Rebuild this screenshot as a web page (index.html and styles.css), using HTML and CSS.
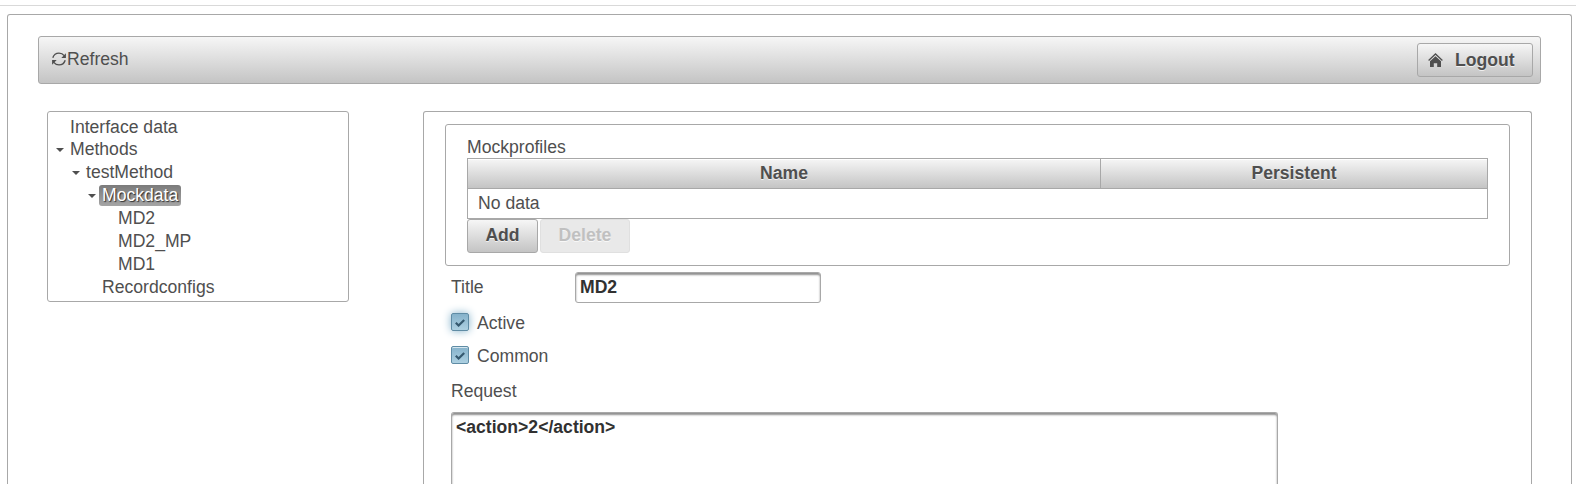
FILE: index.html
```html
<!DOCTYPE html>
<html lang="en">
<head>
<meta charset="utf-8">
<title>Mock configuration</title>
<link rel="stylesheet" href="styles.css">
</head>
<body>
<div class="page">
  <div class="toolbar">
    <a class="refresh"><svg class="refresh-icon" width="14" height="14" viewBox="0 0 14 14"><path d="M.8 5.800C1.700 3 4 1.100 7 1.100c2.100 0 3.900.8 5.200 2.500M13.200 8.200c-.9 2.800-3.200 4.700-6.200 4.700-2.100 0-3.900-.8-5.200-2.500" fill="none" stroke="#4f4f4f" stroke-width="1.400"/><path d="M13.900 1.300v4.600H9.300zM.1 12.700V8.100h4.600z" fill="#4f4f4f"/></svg><span>Refresh</span></a>
    <button class="btn logout"><svg class="home-icon" width="15" height="14" viewBox="0 0 15 14"><path d="M.6 7.400 7.500 1l6.900 6.400" fill="none" stroke="#4f4f4f" stroke-width="1.300"/><path d="M7.500 3.200 13 8.300V14H9.200v-3.700H5.800V14H2V8.300z" fill="#4f4f4f"/></svg><span>Logout</span></button>
  </div>
  <div class="columns">
    <div class="tree">
      <div class="node first">Interface data</div>
      <div class="node"><i class="caret"></i>Methods</div>
      <div class="node level-1"><i class="caret"></i>testMethod</div>
      <div class="node level-2"><i class="caret"></i><span class="selected">Mockdata</span></div>
      <div class="node level-3">MD2</div>
      <div class="node level-3">MD2_MP</div>
      <div class="node level-3">MD1</div>
      <div class="node level-2">Recordconfigs</div>
    </div>
    <div class="content">
      <div class="profiles">
        <div class="profiles-title">Mockprofiles</div>
        <div class="table">
          <div class="table-head"><div class="th name">Name</div><div class="th persistent">Persistent</div></div>
          <div class="table-empty">No data</div>
        </div>
        <div class="actions"><button class="btn add">Add</button><button class="btn delete">Delete</button></div>
      </div>
      <div class="field"><span class="label">Title</span><div class="input">MD2</div></div>
      <div class="check-row"><span class="checkbox focused"><svg width="10" height="8" viewBox="0 0 10 8"><path d="M.8 3.700 3.600 6.500 9.200 1" fill="none" stroke="#35596f" stroke-width="2.200"/></svg></span>Active</div>
      <div class="check-row"><span class="checkbox"><svg width="10" height="8" viewBox="0 0 10 8"><path d="M.8 3.700 3.600 6.500 9.200 1" fill="none" stroke="#35596f" stroke-width="2.200"/></svg></span>Common</div>
      <div class="request-label">Request</div>
      <div class="input request">&lt;action&gt;2&lt;/action&gt;</div>
    </div>
  </div>
</div>
</body>
</html>
```

FILE: styles.css
```css
* { box-sizing: border-box; }
body {
  margin: 0;
  height: 484px;
  overflow: hidden;
  padding: 5px 4px 0 7px;
  background: linear-gradient(#d9d9d9, #d9d9d9) 0 5px / 100% 1px no-repeat #fff;
  font: 17.6px/23px "Liberation Sans", Arial, sans-serif;
  color: #4f4f4f;
}
.page {
  margin-top: 9px;
  height: 470px;
  padding: 21px 30px 0;
  border: 1px solid #a8a8a8;
  border-bottom: 0;
  border-radius: 3px 3px 0 0;
}
.toolbar {
  display: flex;
  justify-content: space-between;
  align-items: flex-start;
  height: 48px;
  padding: 6px 7px 0 13px;
  border: 1px solid #a8a8a8;
  border-radius: 3px;
  background: linear-gradient(#f6f6f6, #c4c4c4);
}
.refresh { display: flex; padding-top: 5px; }
.refresh-icon { margin: 4px 1px 0 0; }
.btn {
  height: 34px;
  padding: 0;
  border: 1px solid #a8a8a8;
  border-radius: 3px;
  background: linear-gradient(#f6f6f6, #c4c4c4);
  font: bold 17.6px/30px "Liberation Sans", Arial, sans-serif;
  color: #4f4f4f;
  text-shadow: 0 1px 0 rgba(255, 255, 255, .7);
}
.logout { display: flex; width: 116px; padding-left: 10px; line-height: 32px; }
.home-icon { margin: 9px 12px 0 0; }
.columns { display: flex; align-items: flex-start; gap: 74px; padding: 27px 9px 0; }
.tree {
  width: 302px;
  height: 191px;
  padding: 4px 0 0 6px;
  border: 1px solid #a8a8a8;
  border-radius: 3px;
}
.node { position: relative; height: 23px; padding-left: 16px; }
.first { height: 22px; }
.level-1 { padding-left: 32px; }
.level-2 { padding-left: 48px; }
.level-3 { padding-left: 64px; }
.caret {
  position: absolute;
  width: 8px;
  height: 4px;
  margin: 10px 0 0 -14px;
  background: #4f4f4f;
  clip-path: polygon(0 0, 100% 0, 50% 100%);
}
.selected {
  display: inline-block;
  height: 21px;
  margin: 1px 0 0 -3px;
  padding: 0 3px;
  border-radius: 3px;
  background: linear-gradient(#7b7b7b, #a5a5a5);
  line-height: 21px;
  color: #fff;
  text-shadow: 1px 1px 1px rgba(0, 0, 0, .7);
  vertical-align: top;
}
.content {
  width: 1109px;
  height: 373px;
  padding: 12px 21px 0;
  border: 1px solid #a8a8a8;
  border-bottom: 0;
  border-radius: 3px 3px 0 0;
}
.profiles {
  height: 142px;
  padding: 11px 21px;
  border: 1px solid #a8a8a8;
  border-radius: 3px;
}
.profiles-title { height: 22px; }
.table { width: 1021px; border: 1px solid #a8a8a8; }
.table-head { display: flex; height: 30px; border-bottom: 1px solid #a8a8a8; }
.th {
  font-weight: bold;
  line-height: 28px;
  text-align: center;
  background: linear-gradient(#f6f6f6, #c4c4c4);
  box-shadow: inset 0 1px 0 #fff;
  text-shadow: 0 1px 0 rgba(255, 255, 255, .7);
}
.name { width: 633px; border-right: 1px solid #a8a8a8; }
.persistent { flex: 1; }
.table-empty { height: 29px; padding-left: 10px; line-height: 29px; }
.actions { display: flex; gap: 2px; }
.actions .btn { padding-bottom: 2px; }
.add { width: 71px; }
.delete {
  width: 90px;
  border-color: #e0e0e0;
  background: #e9e9e9;
  color: #c0c0c0;
}
.field { display: flex; height: 39px; padding: 6px 0 0 6px; }
.label { width: 124px; padding-top: 4px; }
.input {
  width: 246px;
  height: 31px;
  padding: 3px 4px;
  border: 1px solid #a8a8a8;
  border-radius: 3px;
  box-shadow: inset 0 2px 2px #8f8f8f;
  font-weight: bold;
  color: #313131;
}
.check-row { display: flex; align-items: center; gap: 8px; height: 33px; margin-left: 6px; padding-top: 4px; }
.checkbox {
  display: flex;
  align-items: center;
  justify-content: center;
  width: 18px;
  height: 18px;
  margin-top: -4px;
  padding-top: 2px;
  border: 1px solid #5f8ca5;
  border-radius: 2px;
  background: linear-gradient(#85b2cb, #add0e1);
  box-shadow: inset 0 1px 0 #d5e6ef;
}
.checkbox.focused { box-shadow: 0 0 8px #85b2cb; }
.request-label { margin: 9px 0 9px 6px; }
.request {
  width: 827px;
  height: 72px;
  margin-left: 6px;
  border-bottom: 0;
  border-radius: 3px 3px 0 0;
}
```
